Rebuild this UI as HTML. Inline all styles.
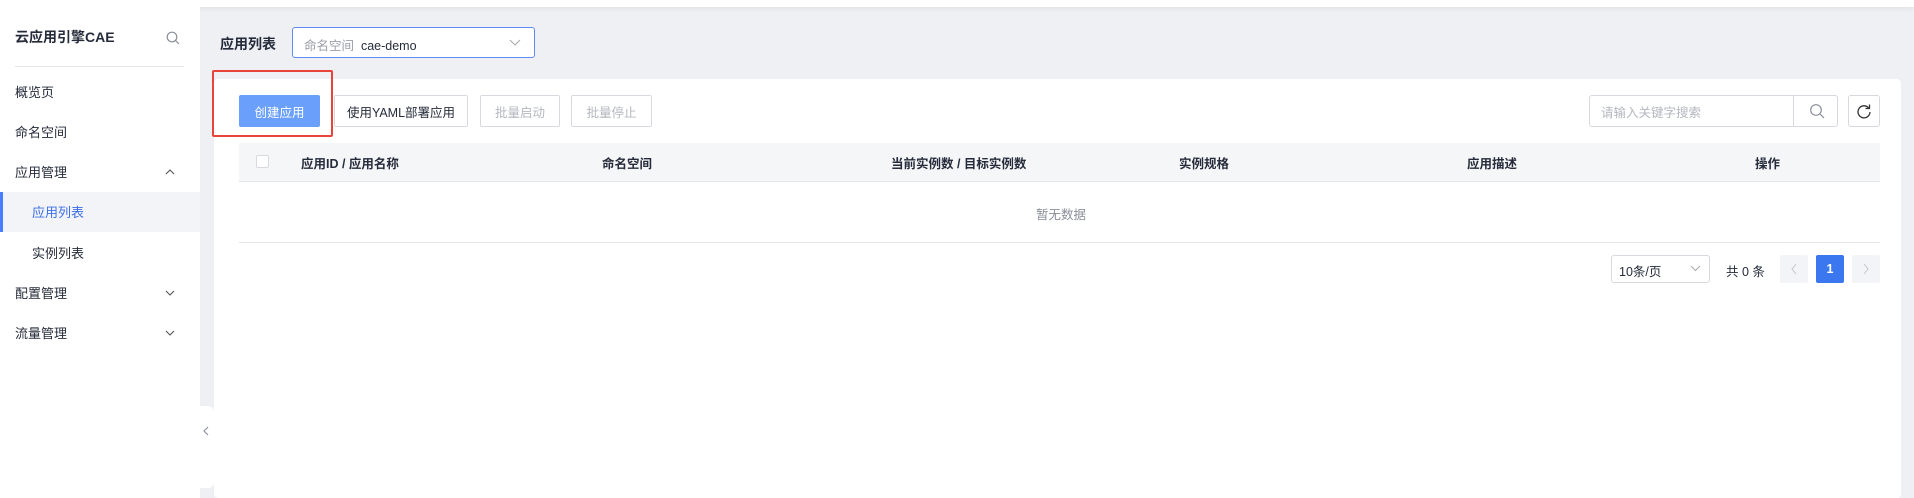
<!DOCTYPE html>
<html><head><meta charset="utf-8"><style>
*{box-sizing:border-box;margin:0;padding:0}
body{width:1914px;height:498px;overflow:hidden;background:#eef0f4;font-family:"Liberation Sans","Noto Sans CJK SC",sans-serif;font-size:13px;color:#252b3a;position:relative}
.a{position:absolute}
.top{left:0;top:0;width:1914px;height:7px;background:#fff;box-shadow:0 2px 6px rgba(0,0,0,.06)}
.side{left:0;top:7px;width:200px;height:491px;background:#fff}
.mi{position:absolute;left:15px;font-size:13px;color:#252b3a}
.btn{position:absolute;top:95px;height:32px;border:1px solid #d7d9de;border-radius:2px;background:#fff;font-size:12.5px;display:flex;align-items:center;justify-content:center}
.th{position:absolute;top:153px;font-size:12.5px;font-weight:bold;color:#252b3a}
.pg{position:absolute;top:255px;width:28px;height:28px;border-radius:2px;display:flex;align-items:center;justify-content:center}
</style></head><body>
<div class="a top"></div>
<div class="a side">
  <div class="a" style="left:15px;top:20px;font-size:14px;font-weight:bold">云应用引擎CAE</div>
  <svg class="a" style="left:166px;top:24px" width="14" height="14" viewBox="0 0 14 14"><circle cx="6" cy="6" r="4.8" fill="none" stroke="#8a8e99" stroke-width="1.2"/><line x1="9.5" y1="9.5" x2="13" y2="13" stroke="#8a8e99" stroke-width="1.2"/></svg>
  <div class="a" style="left:15px;top:59px;width:169px;height:1px;background:#e3e5ea"></div>
  <div class="mi" style="top:75px">概览页</div>
  <div class="mi" style="top:115px">命名空间</div>
  <div class="mi" style="top:155px">应用管理</div>
  <div class="a" style="left:0;top:185px;width:200px;height:40px;background:#f3f4f7;border-left:3px solid #4a7dff"></div>
  <div class="mi" style="top:195px;left:32px;color:#3c6fe8">应用列表</div>
  <div class="mi" style="top:236px;left:32px">实例列表</div>
  <div class="mi" style="top:276px">配置管理</div>
  <div class="mi" style="top:316px">流量管理</div>
  <svg class="a" style="left:165px;top:161px" width="10" height="8"><polyline points="1,6 5,2 9,6" fill="none" stroke="#555" stroke-width="1.1"/></svg>
  <svg class="a" style="left:165px;top:282px" width="10" height="8"><polyline points="1,2 5,6 9,2" fill="none" stroke="#555" stroke-width="1.1"/></svg>
  <svg class="a" style="left:165px;top:322px" width="10" height="8"><polyline points="1,2 5,6 9,2" fill="none" stroke="#555" stroke-width="1.1"/></svg>
</div>
<div class="a" style="left:200px;top:406px;width:14px;height:82px;background:#fff;border-radius:0 6px 6px 0"></div>
<svg class="a" style="left:202px;top:426px" width="8" height="10"><polyline points="6,1 2,5 6,9" fill="none" stroke="#8a8e99" stroke-width="1.1"/></svg>

<div class="a" style="left:220px;top:34px;font-size:14px;font-weight:bold">应用列表</div>
<div class="a" style="left:292px;top:27px;width:243px;height:31px;border:1px solid #5e8cf0;border-radius:3px;background:#fff"></div>
<div class="a" style="left:304px;top:35px;font-size:12.5px;color:#9a9ea8">命名空间 <span style="color:#252b3a">&nbsp;cae-demo</span></div>
<svg class="a" style="left:509px;top:39px" width="12" height="8"><polyline points="1,1 6,6 11,1" fill="none" stroke="#aaa" stroke-width="1"/></svg>

<div class="a" style="left:214px;top:79px;width:1687px;height:419px;background:#fff;border-radius:4px"></div>
<div class="btn" style="left:239px;width:81px;background:#6aa0fb;border-color:#6aa0fb;color:#fff">创建应用</div>
<div class="btn" style="left:334px;width:134px">使用YAML部署应用</div>
<div class="btn" style="left:480px;width:80px;color:#b4b7bf">批量启动</div>
<div class="btn" style="left:571px;width:81px;color:#b4b7bf">批量停止</div>
<div class="a" style="left:212px;top:70px;width:121px;height:67px;border:2px solid #e8443a;border-radius:2px"></div>

<div class="a" style="left:1589px;top:95px;width:249px;height:32px;border:1px solid #d7d9de;border-radius:3px"></div>
<div class="a" style="left:1793px;top:95px;width:1px;height:32px;background:#d7d9de"></div>
<div class="a" style="left:1601px;top:102px;font-size:12.5px;color:#b4b7bf">请输入关键字搜索</div>
<svg class="a" style="left:1809px;top:103px" width="16" height="16"><circle cx="7" cy="7" r="5.3" fill="none" stroke="#8a8e99" stroke-width="1.2"/><line x1="11" y1="11" x2="15" y2="15" stroke="#8a8e99" stroke-width="1.2"/></svg>
<div class="a" style="left:1848px;top:95px;width:32px;height:32px;border:1px solid #d7d9de;border-radius:3px"></div>
<svg class="a" style="left:1856px;top:103px" width="16" height="16"><path d="M13 5.5A6 6 0 1 0 14 9" fill="none" stroke="#333" stroke-width="1.3"/><polyline points="13.5,1.5 13.5,5.5 9.5,5.5" fill="none" stroke="#333" stroke-width="1.3"/></svg>

<div class="a" style="left:239px;top:143px;width:1641px;height:39px;background:#f5f6f8;border-bottom:1px solid #e3e5ea"></div>
<div class="a" style="left:256px;top:155px;width:13px;height:13px;border:1px solid #d7d9de;border-radius:2px;background:#fff"></div>
<div class="th" style="left:301px">应用ID / 应用名称</div>
<div class="th" style="left:602px">命名空间</div>
<div class="th" style="left:891px">当前实例数 / 目标实例数</div>
<div class="th" style="left:1179px">实例规格</div>
<div class="th" style="left:1467px">应用描述</div>
<div class="th" style="left:1755px">操作</div>
<div class="a" style="left:1036px;top:204px;font-size:12.5px;color:#8a8e99">暂无数据</div>
<div class="a" style="left:239px;top:242px;width:1641px;height:1px;background:#e3e5ea"></div>

<div class="a" style="left:1611px;top:255px;width:99px;height:28px;border:1px solid #d7d9de;border-radius:3px"></div>
<div class="a" style="left:1619px;top:261px;font-size:12.5px">10条/页</div>
<svg class="a" style="left:1690px;top:265px" width="11" height="7"><polyline points="1,1 5.5,5.5 10,1" fill="none" stroke="#aaa" stroke-width="1"/></svg>
<div class="a" style="left:1726px;top:261px;font-size:12.5px">共 0 条</div>
<div class="pg" style="left:1780px;background:#f3f4f7"><svg width="8" height="12"><polyline points="6,1 2,6 6,11" fill="none" stroke="#c2c5cc" stroke-width="1"/></svg></div>
<div class="pg" style="left:1816px;background:#3b78f0;color:#fff;font-weight:bold;font-size:12.5px">1</div>
<div class="pg" style="left:1852px;background:#f3f4f7"><svg width="8" height="12"><polyline points="2,1 6,6 2,11" fill="none" stroke="#c2c5cc" stroke-width="1"/></svg></div>
</body></html>
